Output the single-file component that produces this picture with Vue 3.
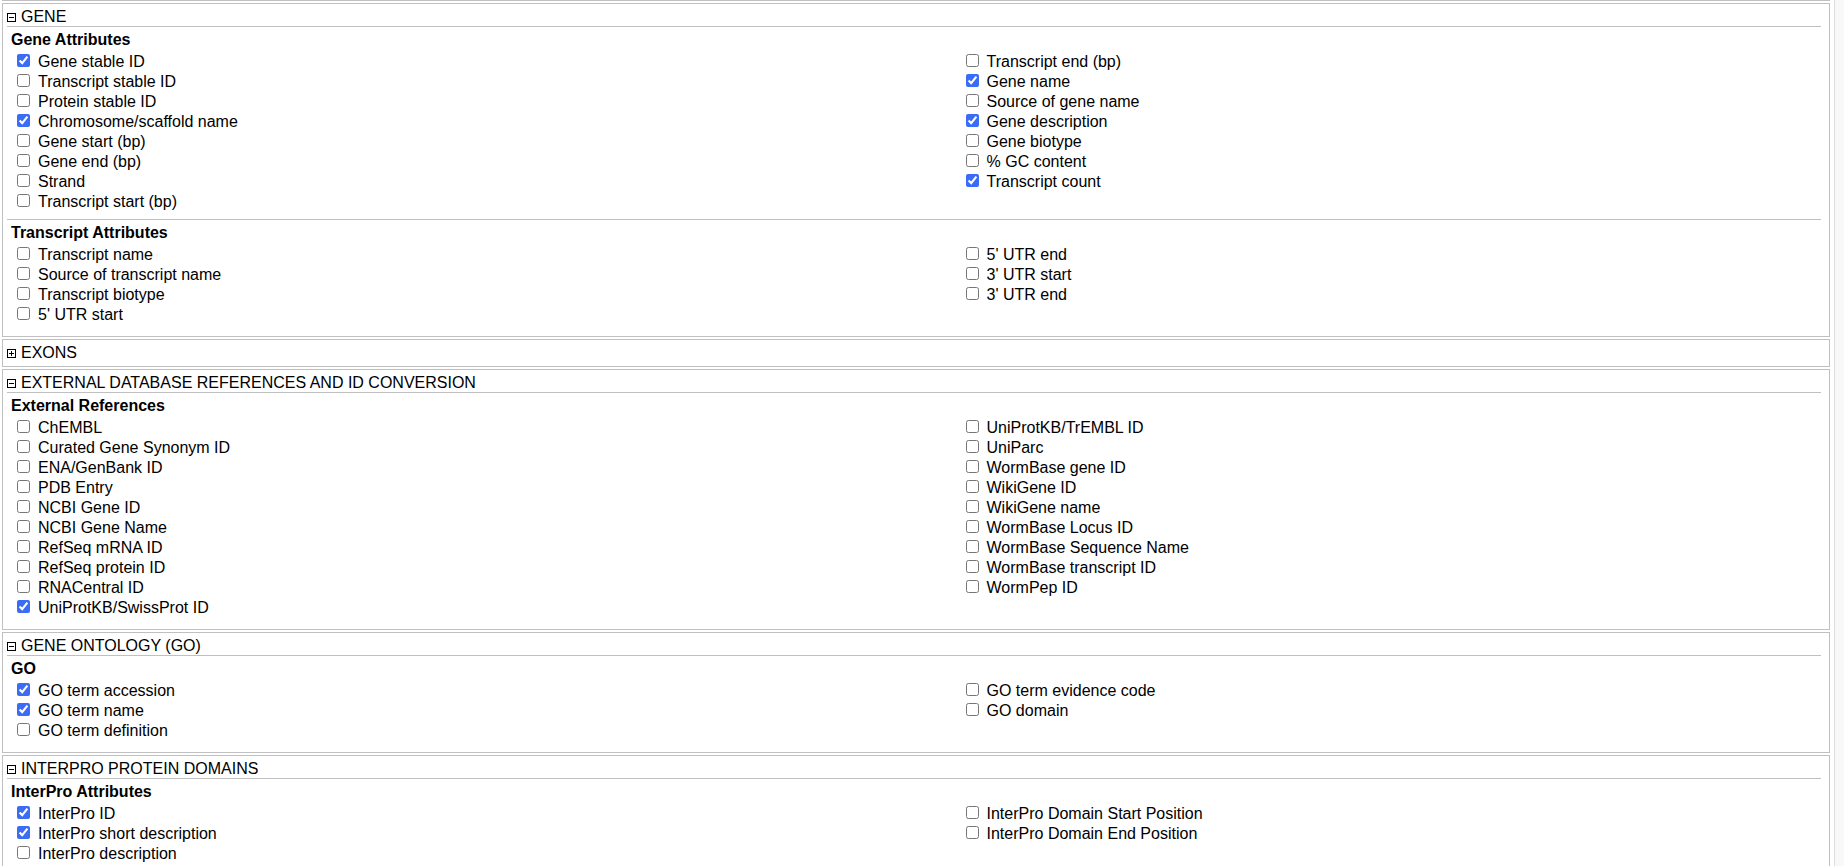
<script setup>
import { reactive } from 'vue'

const item = (label, checked = false) => ({ label, checked })

const sections = reactive([
  {
    title: 'GENE',
    open: true,
    groups: [
      {
        title: 'Gene Attributes',
        columns: [
          [
            item('Gene stable ID', true),
            item('Transcript stable ID'),
            item('Protein stable ID'),
            item('Chromosome/scaffold name', true),
            item('Gene start (bp)'),
            item('Gene end (bp)'),
            item('Strand'),
            item('Transcript start (bp)'),
          ],
          [
            item('Transcript end (bp)'),
            item('Gene name', true),
            item('Source of gene name'),
            item('Gene description', true),
            item('Gene biotype'),
            item('% GC content'),
            item('Transcript count', true),
          ],
        ],
      },
      {
        title: 'Transcript Attributes',
        columns: [
          [
            item('Transcript name'),
            item('Source of transcript name'),
            item('Transcript biotype'),
            item("5' UTR start"),
          ],
          [item("5' UTR end"), item("3' UTR start"), item("3' UTR end")],
        ],
      },
    ],
  },
  { title: 'EXONS', open: false, groups: [] },
  {
    title: 'EXTERNAL DATABASE REFERENCES AND ID CONVERSION',
    open: true,
    groups: [
      {
        title: 'External References',
        columns: [
          [
            item('ChEMBL'),
            item('Curated Gene Synonym ID'),
            item('ENA/GenBank ID'),
            item('PDB Entry'),
            item('NCBI Gene ID'),
            item('NCBI Gene Name'),
            item('RefSeq mRNA ID'),
            item('RefSeq protein ID'),
            item('RNACentral ID'),
            item('UniProtKB/SwissProt ID', true),
          ],
          [
            item('UniProtKB/TrEMBL ID'),
            item('UniParc'),
            item('WormBase gene ID'),
            item('WikiGene ID'),
            item('WikiGene name'),
            item('WormBase Locus ID'),
            item('WormBase Sequence Name'),
            item('WormBase transcript ID'),
            item('WormPep ID'),
          ],
        ],
      },
    ],
  },
  {
    title: 'GENE ONTOLOGY (GO)',
    open: true,
    groups: [
      {
        title: 'GO',
        columns: [
          [item('GO term accession', true), item('GO term name', true), item('GO term definition')],
          [item('GO term evidence code'), item('GO domain')],
        ],
      },
    ],
  },
  {
    title: 'INTERPRO PROTEIN DOMAINS',
    open: true,
    groups: [
      {
        title: 'InterPro Attributes',
        columns: [
          [
            item('InterPro ID', true),
            item('InterPro short description', true),
            item('InterPro description'),
          ],
          [item('InterPro Domain Start Position'), item('InterPro Domain End Position')],
        ],
      },
    ],
  },
])
</script>

<template>
  <div class="page">
    <main class="sections">
      <section v-for="section in sections" :key="section.title" class="section">
        <button
          type="button"
          class="toggle"
          :aria-expanded="section.open"
          @click="section.open = !section.open"
        >
          <svg class="icon" width="9" height="9" viewBox="0 0 9 9" aria-hidden="true">
            <rect x="0.5" y="0.5" width="8" height="8" fill="none" stroke="#000" />
            <path :d="section.open ? 'M2 4.5h5' : 'M2 4.5h5M4.5 2v5'" stroke="#000" />
          </svg>
          <span>{{ section.title }}</span>
        </button>
        <div v-if="section.open" class="body">
          <div v-for="group in section.groups" :key="group.title" class="group">
            <h2 class="heading">{{ group.title }}</h2>
            <div class="columns">
              <ul v-for="(column, c) in group.columns" :key="c" class="column">
                <li v-for="entry in column" :key="entry.label">
                  <label class="option">
                    <input v-model="entry.checked" type="checkbox" class="box" />
                    <span>{{ entry.label }}</span>
                  </label>
                </li>
              </ul>
            </div>
          </div>
        </div>
      </section>
    </main>
    <div class="rail"></div>
  </div>
</template>

<style>
body {
  margin: 0;
  background: #fff;
}
</style>

<style scoped>
.page {
  display: flex;
  align-items: flex-start;
  height: 100vh;
  overflow-y: auto;
  scrollbar-width: none;
  color: #000;
  font: 16px/20px "Liberation Sans", Arial, Helvetica, sans-serif;
}
.sections {
  flex: 1;
  display: flex;
  flex-direction: column;
  gap: 2px;
  margin: 0 4px 0 2px;
  padding-top: 2px;
  border-top: 1px solid #c0c0c2;
}
.rail {
  box-sizing: border-box;
  width: 10px;
  align-self: stretch;
  border-left: 1px solid #ddd;
  background: #f8f8f8;
}
.section {
  border: 1px solid #c0c0c2;
}
.toggle {
  display: flex;
  align-items: flex-start;
  gap: 5px;
  width: 100%;
  padding: 3px 4px;
  border: 0;
  background: none;
  color: inherit;
  font: inherit;
  text-align: left;
  cursor: pointer;
}
.icon {
  flex: none;
  margin-top: 6px;
}
.body {
  margin-top: -4px;
  padding-bottom: 4px;
}
.group {
  padding-bottom: 7px;
}
.group::before {
  content: "";
  display: block;
  height: 1px;
  margin: 0 8px 0 4px;
  background: #c0c0c2;
}
.heading {
  margin: 0;
  padding: 3px 8px 2px;
  font-size: 16px;
  line-height: 20px;
  font-weight: bold;
}
.columns {
  display: grid;
  grid-template-columns: calc(52% - 1px) 1fr;
}
.column {
  margin: 0;
  padding: 0 0 0 14px;
  list-style: none;
}
.column li {
  display: flex;
}
.option {
  display: flex;
  align-items: flex-start;
  gap: 8px;
}
.box {
  flex: none;
  width: 13px;
  height: 13px;
  margin: 2px 0 0;
  accent-color: #3b6cf6;
}
</style>
